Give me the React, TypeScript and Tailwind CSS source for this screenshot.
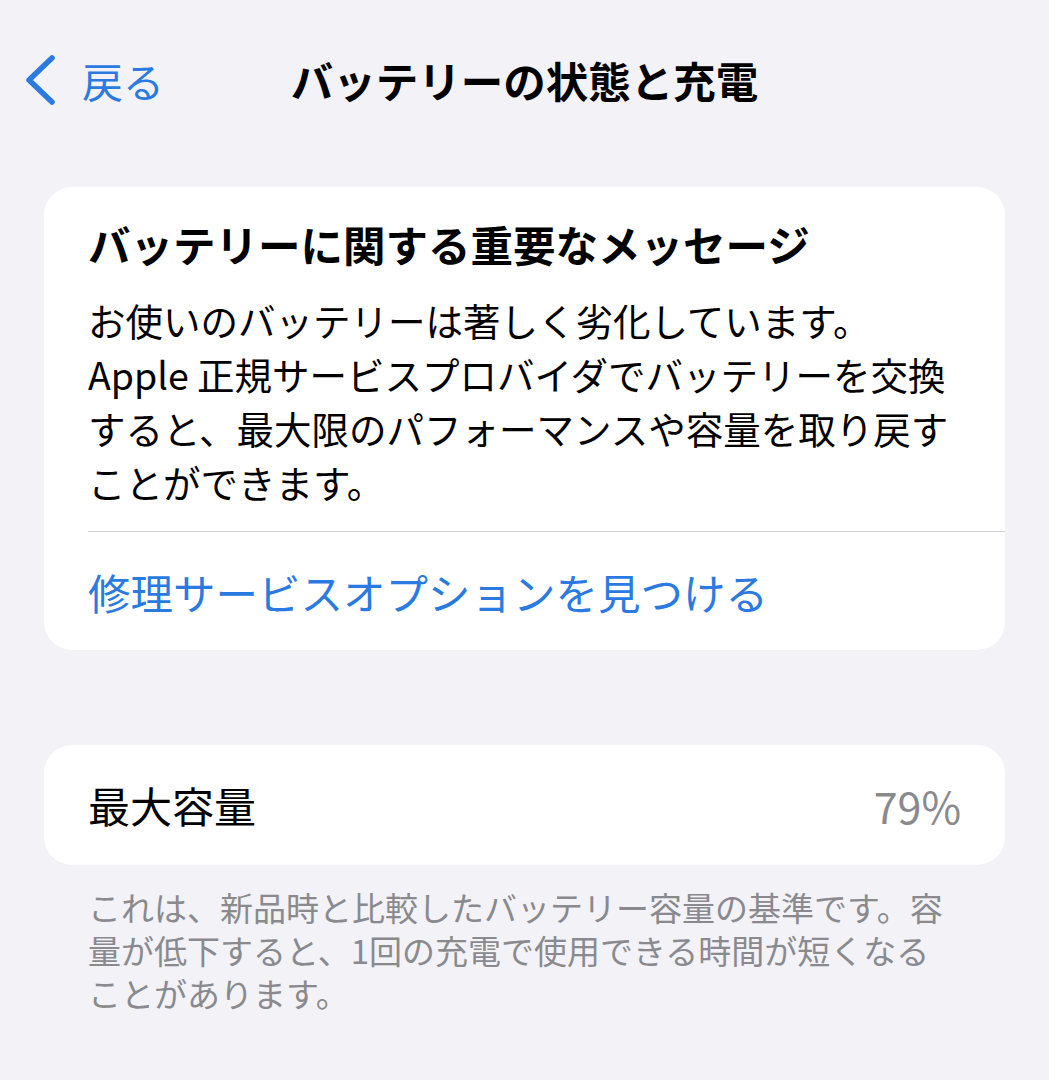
import React from "react";

const FONT = { fontFamily: '"Noto Sans CJK JP", "Noto Sans", sans-serif' };

export default function App() {
  return (
    <div className="min-h-[1080px] w-full bg-[#f2f2f7] text-black" style={FONT}>
      <header className="grid h-[160px] grid-cols-[1fr_auto_1fr] items-center">
        <div className="flex items-center pl-[24px]">
          <svg width="34" height="52" viewBox="0 0 34 52" className="mr-[24px]">
            <path
              d="M28 4 L5 26 L28 48"
              fill="none"
              stroke="#2a7ae2"
              strokeWidth="5.5"
              strokeLinecap="round"
              strokeLinejoin="round"
            />
          </svg>
          <span className="text-[41px] leading-none text-[#2a7ae2]">戻る</span>
        </div>
        <h1 className="text-[42.5px] font-bold leading-none whitespace-nowrap">
          バッテリーの状態と充電
        </h1>
        <div />
      </header>

      <section className="mx-[44px] mt-[27px] rounded-[28px] bg-white pl-[44px]">
        <h2 className="pt-[30px] text-[42.5px] font-bold leading-[54px] whitespace-nowrap">
          バッテリーに関する重要なメッセージ
        </h2>
        <div className="mt-[22px] text-[37.5px] leading-[54px] whitespace-nowrap">
          <p>お使いのバッテリーは著しく劣化しています。</p>
          <p>Apple 正規サービスプロバイダでバッテリーを交換</p>
          <p>すると、最大限のパフォーマンスや容量を取り戻す</p>
          <p>ことができます。</p>
        </div>
        <div className="mt-[22px] h-px bg-[#d1d1d6]" />
        <div className="pt-[33px] pb-[31px] text-[42.5px] leading-[54px] text-[#2a7ae2] whitespace-nowrap">
          修理サービスオプションを見つける
        </div>
      </section>

      <section className="mx-[44px] mt-[95px] flex h-[120px] items-center justify-between rounded-[28px] bg-white px-[44px]">
        <span className="text-[42px] leading-none">最大容量</span>
        <span className="text-[43px] leading-none text-[#8a8a8e]">79%</span>
      </section>

      <div className="mx-[88px] mt-[21px] text-[33px] leading-[43px] text-[#8a8a8e] whitespace-nowrap">
        <p>これは、新品時と比較したバッテリー容量の基準です。容</p>
        <p>量が低下すると、1回の充電で使用できる時間が短くなる</p>
        <p>ことがあります。</p>
      </div>
    </div>
  );
}
